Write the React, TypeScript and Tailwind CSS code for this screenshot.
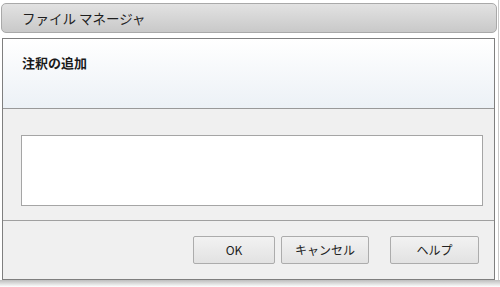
const font = {
  fontFamily: '"Noto Sans CJK JP", "Noto Sans", sans-serif',
};

function DialogButton({ label, width }: { label: string; width: string }) {
  return (
    <button
      className={`h-[28px] ${width} rounded-[2px] border border-[#acacac] bg-gradient-to-b from-[#f2f2f2] to-[#e2e2e2] text-[12px] leading-none text-[#222]`}
      style={font}
    >
      {label}
    </button>
  );
}

export default function App() {
  return (
    <div className="relative h-[287px] w-[500px] overflow-hidden bg-white" style={font}>
      <div className="flex h-[280px] w-[499px] flex-col pt-[3px] pl-[1px] border-r border-[#c8c8c8]">
        {/* title bar */}
        <div className="flex h-[30px] w-[496px] items-center rounded-[5px] border border-[#a9a9a9] bg-gradient-to-b from-[#e2e2e2] to-[#c9c9c9] pl-[20px]">
          <span className="text-[13.5px] text-[#1f1f1f]">ファイル マネージャ</span>
        </div>

        {/* panel */}
        <div className="mt-[5px] ml-[1px] flex w-[493px] flex-1 flex-col border border-[#7f7f7f] bg-[#f0f0f0]">
          <div className="h-[70px] border-b border-[#999] bg-gradient-to-b from-white to-[#ecf1f6] px-[19px] pt-[10px]">
            <span className="text-[13px] font-bold text-[#1a1a1a]">注釈の追加</span>
          </div>

          <div className="h-[112px] border-b border-[#a0a0a0] pt-[26px] pl-[18px]">
            <div className="h-[71px] w-[462px] border border-[#a5a5a5] bg-white" />
          </div>

          <div className="flex flex-1 items-start pt-[15px] pl-[190px]">
            <DialogButton label="OK" width="w-[82px]" />
            <div className="w-[6px]" />
            <DialogButton label="キャンセル" width="w-[88px]" />
            <div className="w-[21px]" />
            <DialogButton label="ヘルプ" width="w-[89px]" />
          </div>
        </div>
      </div>
      <div className="h-[7px] w-full bg-gradient-to-b from-[#bdbdbd] to-white" />
    </div>
  );
}
